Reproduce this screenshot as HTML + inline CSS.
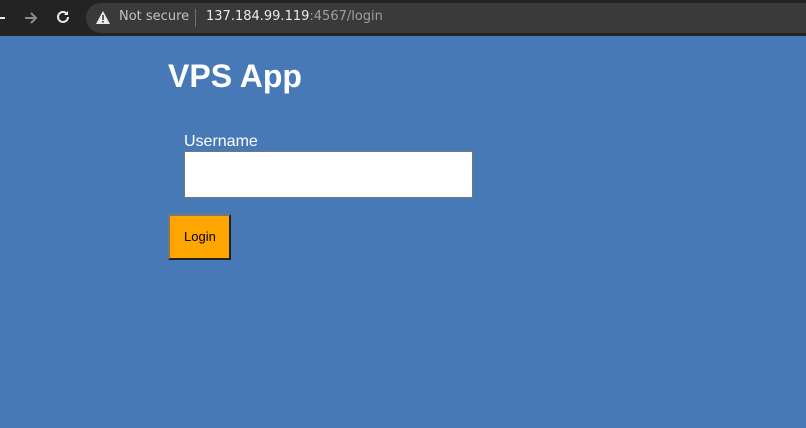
<!DOCTYPE html>
<html><head><style>
body{margin:0;width:806px;height:428px;overflow:hidden;background:#4879b7;font-family:"Liberation Sans",sans-serif;position:relative}
.bar{position:absolute;left:0;top:0;width:806px;height:36px;background:#232323}
.om{position:absolute;left:86px;top:3px;width:740px;height:30px;border-radius:15px;background:#3a3a3a}
.t{position:absolute;white-space:nowrap}
</style></head><body>
<div class="bar">
<div style="position:absolute;left:0;top:17px;width:5px;height:2px;background:#e8eaed"></div>
<svg class="t" style="left:22px;top:9px" width="18" height="18" viewBox="0 0 18 18"><path d="M3 9h11M9 4l5 5-5 5" stroke="#8a8b8e" stroke-width="2" fill="none"/></svg>
<svg class="t" style="left:54px;top:8px" width="18" height="18" viewBox="0 0 18 18"><path d="M14 9a5 5 0 1 1-1.5-3.6" stroke="#e8eaed" stroke-width="2" fill="none"/><path d="M14 3v4h-4z" fill="#e8eaed"/></svg>
<div class="om"></div>
<svg class="t" style="left:95px;top:10px" width="16" height="15" viewBox="0 0 16 15"><path d="M8 1L15 14H1z" fill="#e8eaed"/><rect x="7.2" y="5" width="1.6" height="5" fill="#3a3a3a"/><rect x="7.2" y="11" width="1.6" height="1.6" fill="#3a3a3a"/></svg>
<div class="t" style="left:119px;top:9px;color:#bdc1c6;font-family:'DejaVu Sans',sans-serif;font-size:13px">Not secure</div>
<div style="position:absolute;left:195px;top:9px;width:1px;height:18px;background:#6f7378"></div>
<div class="t" style="left:206px;top:9px;font-family:'DejaVu Sans',sans-serif;font-size:13px;color:#e8eaed">137.184.99.119<span style="color:#9aa0a6">:4567/login</span></div>
</div>
<div class="t" style="left:168px;top:58px;font-size:32px;font-weight:bold;color:#fff">VPS App</div>
<div class="t" style="left:184px;top:133px;font-size:16px;color:#fff">Username</div>
<div style="position:absolute;left:184px;top:151px;width:287px;height:45px;background:#fff;border:1px solid #767676"></div>
<div style="position:absolute;left:168px;top:214px;width:59px;height:42px;background:#ffa500;border:2px solid;border-color:#777 #222 #222 #777"></div>
<div class="t" style="left:184px;top:229px;font-size:13px;color:#000">Login</div>
</body></html>
